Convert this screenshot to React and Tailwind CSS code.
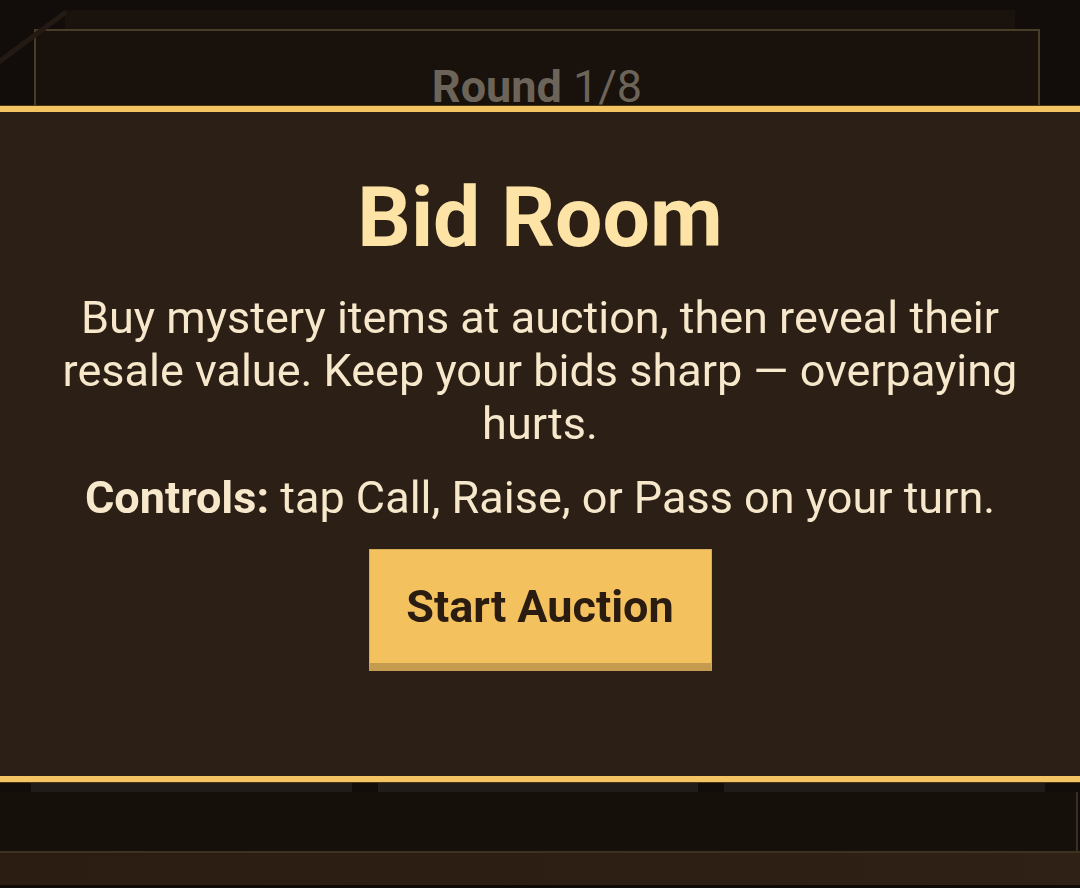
export default function App() {
  return (
    <div
      className="relative w-[1080px] h-[888px] overflow-hidden bg-[#120d0a]"
      style={{ fontFamily: "Roboto, 'Liberation Sans', sans-serif" }}
    >
      <svg className="absolute left-0 top-0" width="80" height="70" viewBox="0 0 80 70">
        <line x1="-4" y1="64" x2="66" y2="12" stroke="#241a13" strokeWidth="5" />
      </svg>
      <div className="h-[10px]" />
      <div className="mx-[65px] h-[19px] bg-[#1a120c]" />
      <div className="ml-[34px] w-[1006px] h-[731px] border-2 border-[#4a3d27] bg-[#18110c] pt-[33px] text-center">
        <div className="text-[45px] leading-none text-[#6c6459]">
          <span className="font-bold">Round</span> 1/8
        </div>
      </div>
      <div className="mt-[10px] flex gap-[26px] pl-[31px]">
        <div className="w-[321px] h-[22px] bg-[#201c19]" />
        <div className="w-[320px] h-[22px] bg-[#201c19]" />
        <div className="w-[321px] h-[22px] bg-[#201c19]" />
      </div>
      <div className="h-[59px] mr-[2px] border-r-2 border-[#3a2f20] bg-[#16100b]" />
      <div className="h-[2px] bg-[#3d3220]" />
      <div className="h-[32px] bg-gradient-to-r from-[#2b1d12] via-[#2c1e13] to-[#2f2115]" />
      <div className="h-[3px] bg-[#110b08]" />

      <div className="fixed inset-0 flex items-center justify-center">
        <div className="w-full h-[676px] bg-[#2c2016] border-y-[6px] border-[#f4c462] shadow-[0_0_0_1px_#4a3516] flex flex-col items-center px-[50px] pt-[64px] text-center">
          <h1 className="text-[84px] leading-none font-bold text-[#fde4a6]">Bid Room</h1>
          <p className="mt-[31px] text-[45px] leading-[53px] text-[#f7e8cc]">
            Buy mystery items at auction, then reveal their resale value. Keep your bids sharp — overpaying hurts.
          </p>
          <p className="mt-[22px] text-[45px] leading-[52px] text-[#f7e8cc]">
            <span className="font-bold">Controls:</span> tap Call, Raise, or Pass on your turn.
          </p>
          <button className="mt-[25px] w-[343px] h-[122px] bg-[#f3c15e] border-t border-x border-[#d9aa55] border-b-[8px] border-b-[#c59c4f] text-[45px] font-bold text-[#2a1c10]">
            Start Auction
          </button>
        </div>
      </div>
    </div>
  );
}
